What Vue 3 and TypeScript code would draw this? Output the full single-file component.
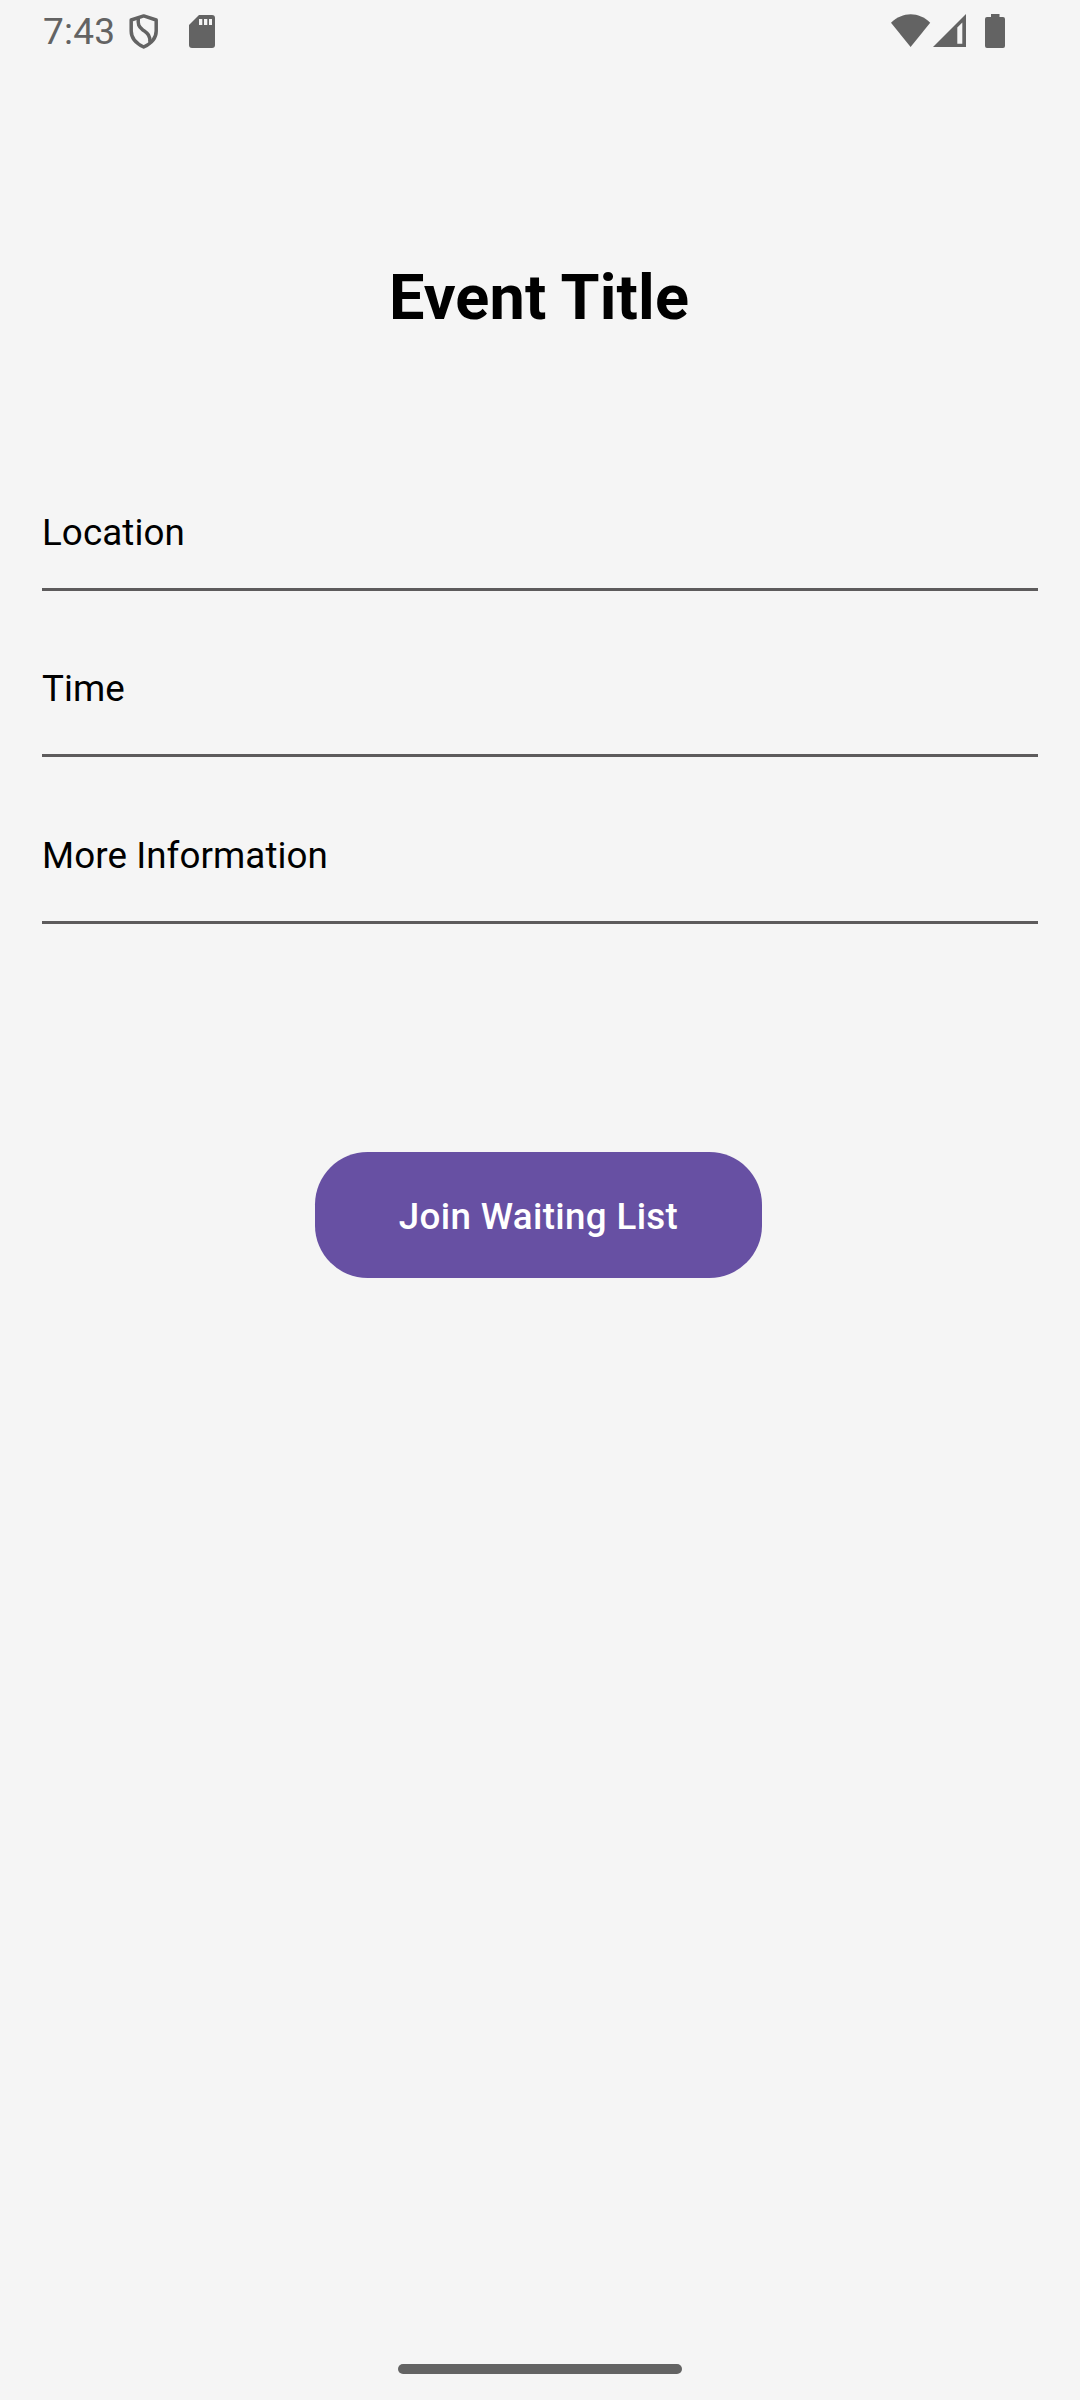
<script setup lang="ts">
interface Field {
  id: string
  label: string
}

const time: string = '7:43'
const title: string = 'Event Title'
const fields: Field[] = [
  { id: 'location', label: 'Location' },
  { id: 'time', label: 'Time' },
  { id: 'info', label: 'More Information' },
]
</script>

<template>
  <div class="screen">
    <header class="status">
      <span class="clock">{{ time }}</span>
      <svg class="shield" width="30" height="37" viewBox="0 0 30 37" fill="none" stroke="#636363" stroke-width="3.5" stroke-linejoin="round">
        <path d="M14.700 2.900 27.200 7v11c0 7-5 12.500-12.500 16C7.200 30.500 2.200 25 2.200 18V7z" />
        <path d="M9.300 5C8.800 11.500 9.500 13.500 13.700 16.800 17.500 19.800 21.500 21.500 20.800 29" />
      </svg>
      <svg class="card" width="26" height="33" viewBox="0 0 26 33">
        <path fill="#636363" d="M10 0h13a3 3 0 0 1 3 3v27a3 3 0 0 1-3 3H3a3 3 0 0 1-3-3V10z" />
        <path fill="#f4f4f4" d="M10 4h3.300v6H10zM15 4h3.300v6H15zM20 4h3v6h-3z" />
      </svg>
      <svg class="wifi" width="40" height="33" viewBox="0 0 40 33">
        <path fill="#636363" d="M0 8.800C11.500-2.600 28-2.600 39.200 8.800L19.600 33z" />
      </svg>
      <svg class="signal" width="33" height="33" viewBox="0 0 33 33">
        <path fill="#636363" d="M0 33 33 0v33z" />
        <path fill="#f4f4f4" d="M24.300 13.500 29.300 8.500v21.300h-5z" />
      </svg>
      <svg class="battery" width="20" height="34" viewBox="0 0 20 34">
        <path fill="#636363" d="M6 0h8.500v3H18a2 2 0 0 1 2 2v27a2 2 0 0 1-2 2H2a2 2 0 0 1-2-2V5a2 2 0 0 1 2-2h4z" />
      </svg>
    </header>

    <main class="content">
      <h1 class="title">{{ title }}</h1>
      <section class="fields">
        <div v-for="field in fields" :key="field.id" :class="['field', field.id]">{{ field.label }}</div>
      </section>
      <button class="join" type="button">Join Waiting List</button>
    </main>

    <footer class="nav"><div class="handle"></div></footer>
  </div>
</template>

<style>
body {
  margin: 0;
  background: #f5f5f5;
}
</style>

<style scoped>
.screen {
  display: flex;
  flex-direction: column;
  width: 1080px;
  height: 2400px;
  background: #f5f5f5;
  color: #000;
  font-family: Roboto, sans-serif;
}
.status {
  display: flex;
  box-sizing: border-box;
  height: 63px;
  padding-left: 43px;
  color: #636363;
}
.status svg {
  flex: none;
  display: block;
}
.clock {
  width: 86px;
  padding-top: 10px;
  font-size: 37px;
  line-height: 44px;
  letter-spacing: 0.2px;
}
.shield {
  margin-top: 13px;
}
.card {
  margin: 15px 0 0 30px;
}
.wifi {
  margin: 14px 0 0 676px;
}
.signal {
  margin: 14px 0 0 2px;
}
.battery {
  margin: 14px 0 0 19px;
}
.content {
  flex: 1;
  display: flex;
  flex-direction: column;
  align-items: center;
}
.title {
  margin: 198px 2px 0 0;
  font-size: 63px;
  font-weight: 700;
  line-height: 74px;
  letter-spacing: 0.15px;
}
.fields {
  width: 996px;
  margin-top: 153px;
}
.field {
  box-sizing: border-box;
  height: 167px;
  padding-top: 77px;
  border-bottom: 3px solid #5d5b5c;
  font-size: 36.75px;
  line-height: 44px;
  letter-spacing: 0.08px;
}
.location {
  height: 103px;
  padding-top: 23px;
}
.time {
  height: 166px;
  padding-top: 76px;
}
.join {
  width: 447px;
  height: 126px;
  margin: 228px 3px 0 0;
  padding: 3px 0 0;
  border: 0;
  border-radius: 52.5px;
  background: #6750a3;
  color: #fff;
  font-family: Roboto, sans-serif;
  font-size: 36.75px;
  font-weight: 500;
  line-height: 44px;
  letter-spacing: 0.34px;
}
.nav {
  display: flex;
  justify-content: center;
  height: 36px;
}
.handle {
  width: 284px;
  height: 10px;
  border-radius: 5px;
  background: #636363;
}
</style>
